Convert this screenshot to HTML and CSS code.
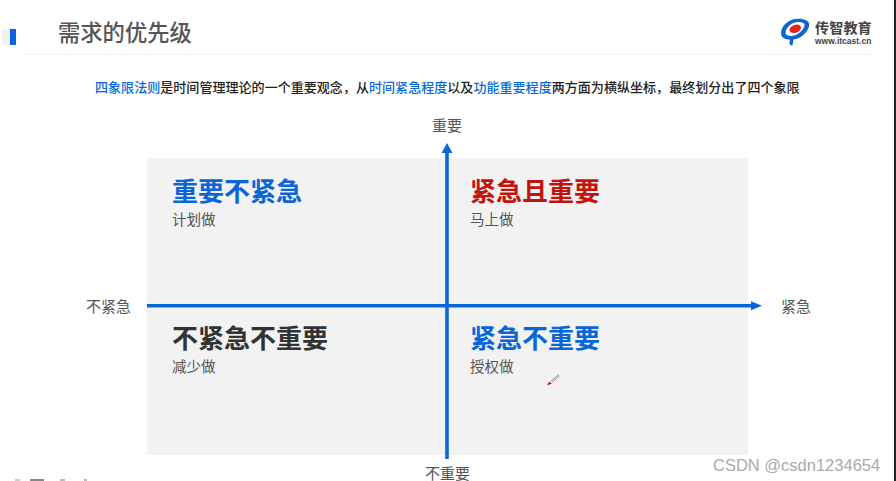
FILE: index.html
```html
<!DOCTYPE html>
<html lang="zh-CN">
<head>
<meta charset="utf-8">
<title>需求的优先级</title>
<link rel="stylesheet" href="styles.css">
</head>
<body>
<div class="slide">
  <header class="header">
    <div class="marker"><span class="marker-shade"></span><span class="marker-bar"></span></div>
    <div class="header-main">
      <h1 class="title">需求的优先级</h1>
      <div class="logo">
        <svg class="logo-mark" viewBox="0 0 30 28" width="30" height="28" aria-hidden="true">
          <path d="M1.2 16.500C0.200 9.500 7 1.400 17 0.800C23.500 0.400 29.200 2.600 29.200 6.200C29.200 13.200 21 21 13.500 21.600L12.400 27.600C11 27.800 10 26.800 9.400 25.600L10 21.600C5.600 21.600 1.800 20 1.200 16.500ZM5.600 15.600C6 17.400 8.600 18.200 11.800 18C17.800 17.400 24.400 11.600 24.600 7C24.600 5 21.400 3.800 17.600 4C10.800 4.600 5 10.600 5.600 15.600Z" fill="#0b66d0"/>
          <ellipse cx="15.200" cy="10.800" rx="6" ry="3.900" transform="rotate(-20 15.200 10.800)" fill="#e2231a"/>
        </svg>
        <div class="logo-text">
          <span class="logo-name">传智教育</span>
          <span class="logo-url">www.itcast.cn</span>
        </div>
      </div>
    </div>
  </header>

  <p class="intro"><span class="accent">四象限法则</span>是时间管理理论的一个重要观念，从<span class="accent">时间紧急程度</span>以及<span class="accent">功能重要程度</span>两方面为横纵坐标，最终划分出了四个象限</p>

  <section class="matrix">
    <div class="axis axis-top">重要</div>
    <div class="axis axis-left">不紧急</div>
    <div class="field">
      <div class="quad">
        <h2 class="quad-title blue">重要不紧急</h2>
        <p class="quad-sub">计划做</p>
      </div>
      <div class="quad quad-right">
        <h2 class="quad-title red">紧急且重要</h2>
        <p class="quad-sub">马上做</p>
      </div>
      <div class="quad quad-lower">
        <h2 class="quad-title dark">不紧急不重要</h2>
        <p class="quad-sub">减少做</p>
      </div>
      <div class="quad quad-right quad-lower">
        <h2 class="quad-title blue">紧急不重要</h2>
        <p class="quad-sub">授权做</p>
      </div>
      <svg class="arrows" viewBox="0 0 620 305" width="620" height="305" aria-hidden="true">
        <path d="M300 301V-6" stroke="#0a66d6" stroke-width="3.600" fill="none"/>
        <path d="M300 -15L305.500 -5H294.500Z" fill="#0a66d6"/>
        <path d="M0 147.700H606" stroke="#0a66d6" stroke-width="3.500" fill="none"/>
        <path d="M615 147.800L604 143.300V152.300Z" fill="#0a66d6"/>
      </svg>
      <svg class="pen" viewBox="0 0 14 14" width="14" height="14" aria-hidden="true">
        <path d="M13 1.500L5 8" stroke="#8a8a8a" stroke-width="1"/>
        <path d="M13.500 3L6 9.500" stroke="#9a9a9a" stroke-width="1"/>
        <path d="M1 12.500L3 8.500L6 10.500Z" fill="#d0182c"/>
      </svg>
    </div>
    <div class="axis axis-right">紧急</div>
    <div class="axis axis-bottom">不重要</div>
  </section>

  <div class="clipped">
    <span class="clip-a"></span><span class="clip-b"></span><span class="clip-c"></span><span class="clip-d"></span>
  </div>
  <div class="watermark">CSDN @csdn1234654</div>
  <div class="edge"></div>
</div>
</body>
</html>
```
FILE: styles.css
```css
* { box-sizing: border-box; }
html, body { margin: 0; padding: 0; }
body {
  width: 896px;
  height: 481px;
  overflow: hidden;
  background: #fff;
  font-family: "Noto Sans CJK SC", "Liberation Sans", sans-serif;
}
.slide {
  position: relative;
  width: 896px;
  height: 481px;
  overflow: hidden;
}
.header {
  display: flex;
  height: 55px;
}
.marker {
  display: flex;
  align-items: flex-start;
  width: 24px;
  padding: 29px 0 0 2px;
}
.marker-shade { width: 8px; height: 16px; background: #f2f2f2; }
.marker-bar { width: 6px; height: 16px; background: #0a66e0; }
.header-main {
  display: flex;
  justify-content: space-between;
  width: 848px;
  padding-left: 34px;
  border-bottom: 1px solid #f0f0f0;
}
.title {
  margin: 15px 0 0;
  font-size: 22.300px;
  line-height: 32px;
  font-weight: 500;
  color: #555;
}
.logo {
  display: flex;
  gap: 5px;
  padding-top: 18px;
}
.logo-text { display: flex; flex-direction: column; width: 57px; }
.logo-name {
  font-size: 14.200px;
  line-height: 18px;
  font-weight: 700;
  color: #444;
  white-space: nowrap;
}
.logo-url {
  font-family: "Liberation Sans", sans-serif;
  font-size: 8.500px;
  line-height: 10px;
  font-weight: 700;
  color: #444;
  white-space: nowrap;
}
.intro {
  margin: 22px 0 0 95px;
  font-size: 13.060px;
  line-height: 19px;
  font-weight: 500;
  color: #222;
  white-space: nowrap;
}
.accent { color: #0a6ad6; }
.matrix {
  display: grid;
  grid-template-columns: 147px 601px 148px;
  grid-template-rows: 43px 297px 22px;
  margin-top: 19px;
}
.axis {
  font-size: 15px;
  line-height: 20px;
  color: #555;
  white-space: nowrap;
}
.axis-top {
  grid-column: 2;
  grid-row: 1;
  justify-self: center;
  margin-left: -1px;
}
.axis-left {
  grid-column: 1;
  grid-row: 2;
  justify-self: end;
  align-self: center;
  margin-right: 16px;
  padding-bottom: 2px;
}
.field {
  position: relative;
  grid-column: 2;
  grid-row: 2;
  display: grid;
  grid-template-columns: 300px 301px;
  grid-template-rows: 148px 149px;
  background: #f2f2f2;
}
.axis-right {
  grid-column: 3;
  grid-row: 2;
  align-self: center;
  margin-left: 33px;
  padding-bottom: 2px;
}
.axis-bottom {
  grid-column: 2;
  grid-row: 3;
  justify-self: center;
  margin-top: 10px;
  line-height: 16px;
}
.quad { padding: 14px 0 0 25px; }
.quad-right { padding-left: 23px; }
.quad-lower { padding-top: 13px; }
.quad-title {
  margin: 0;
  font-size: 26px;
  line-height: 36px;
  font-weight: 700;
}
.blue { color: #0a66d6; }
.red { color: #c2140c; }
.dark { color: #333; }
.quad-sub {
  margin: 1px 0 0;
  font-size: 14.500px;
  line-height: 20px;
  color: #555;
}
.arrows {
  position: absolute;
  left: 0;
  top: 0;
  overflow: visible;
}
.pen {
  position: absolute;
  left: 399px;
  top: 215px;
}
.clipped {
  position: absolute;
  left: 15px;
  top: 479px;
  display: flex;
}
.clipped span { display: block; height: 3px; }
.clip-a { width: 5px; background: #ccc; }
.clip-b { width: 14px; margin-left: 10px; background: #888; }
.clip-c { width: 5px; margin-left: 16px; background: #bbb; }
.clip-d { width: 3px; margin-left: 19px; background: #bbb; }
.watermark {
  position: absolute;
  left: 713px;
  top: 456px;
  font-family: "Liberation Sans", sans-serif;
  font-size: 16.500px;
  line-height: 18px;
  color: #aaa;
  white-space: nowrap;
}
.edge {
  position: absolute;
  right: 0;
  top: 0;
  width: 2px;
  height: 481px;
  background: #222;
}
```
